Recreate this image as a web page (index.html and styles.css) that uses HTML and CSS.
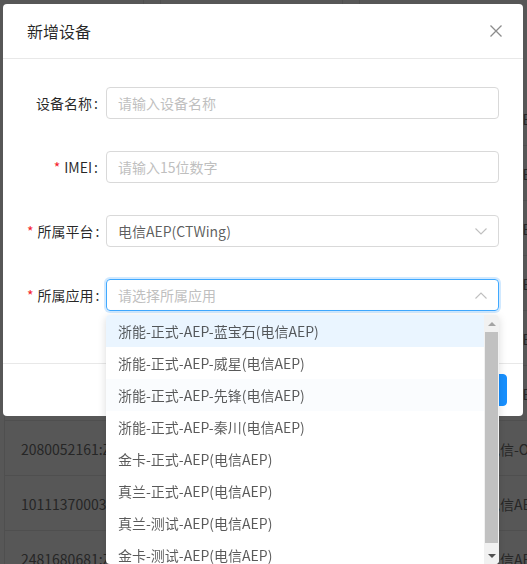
FILE: index.html
```html
<!DOCTYPE html>
<html lang="zh">
<head>
<meta charset="utf-8">
<title>新增设备</title>
<link rel="stylesheet" href="styles.css">
</head>
<body>
<div class="page">
  <div class="thead">
    <div class="th th-a"></div>
    <div class="th th-b"></div>
    <div class="th th-c"></div>
    <div class="th th-d"></div>
    <div class="th th-e"></div>
  </div>
  <div class="table">
    <div class="row"><span class="c1">1204510032:ZN</span><span class="c2">电信AEP</span></div>
    <div class="row"><span class="c1">2080052158:ZN</span><span class="c2">电信AEP</span></div>
    <div class="row"><span class="c1">2080052159:ZN</span><span class="c2">电信AEP</span></div>
    <div class="row"><span class="c1">2080052160:ZN</span><span class="c2">电信AEP</span></div>
    <div class="row"><span class="c1">2080052162:ZN</span><span class="c2">电信AEP</span></div>
    <div class="row"><span class="c1">2080052163:ZN</span><span class="c2">电信AEP</span></div>
    <div class="row"><span class="c1">2080052161:ZN</span><span class="c2">电信-OC</span></div>
    <div class="row"><span class="c1">10111370003658</span><span class="c2">电信AEP</span></div>
    <div class="row"><span class="c1">2481680681:ZN</span><span class="c2">电信AEP</span></div>
  </div>
</div>

<div class="mask">
  <div class="modal">
    <div class="modal-header">
      <span class="modal-title">新增设备</span>
      <button class="modal-close" type="button" aria-label="关闭">
        <svg width="12" height="12" viewBox="0 0 12 12"><path d="M0.5 0.5 L11.5 11.5 M11.5 0.5 L0.5 11.5" stroke="#8c8c8c" stroke-width="1.3" fill="none"/></svg>
      </button>
    </div>
    <div class="modal-body">
      <div class="form-item">
        <label class="form-label">设备名称</label>
        <div class="form-control"><input class="input" type="text" placeholder="请输入设备名称"></div>
      </div>
      <div class="form-item">
        <label class="form-label"><span class="req">*</span>IMEI</label>
        <div class="form-control"><input class="input" type="text" placeholder="请输入15位数字"></div>
      </div>
      <div class="form-item">
        <label class="form-label"><span class="req">*</span>所属平台</label>
        <div class="form-control">
          <div class="select">
            <span class="select-value">电信AEP(CTWing)</span>
            <svg class="select-arrow" width="12" height="7" viewBox="0 0 12 7"><path d="M0.5 0.5 L6 6 L11.5 0.5" stroke="#bfbfbf" stroke-width="1.1" fill="none"/></svg>
          </div>
        </div>
      </div>
      <div class="form-item">
        <label class="form-label"><span class="req">*</span>所属应用</label>
        <div class="form-control">
          <div class="select select-open">
            <span class="select-placeholder">请选择所属应用</span>
            <svg class="select-arrow" width="12" height="7" viewBox="0 0 12 7"><path d="M0.5 6.5 L6 1 L11.5 6.5" stroke="#bfbfbf" stroke-width="1.1" fill="none"/></svg>
          </div>
          <div class="dropdown">
            <ul class="options">
              <li class="option option-active">浙能-正式-AEP-蓝宝石(电信AEP)</li>
              <li class="option">浙能-正式-AEP-威星(电信AEP)</li>
              <li class="option option-hover">浙能-正式-AEP-先锋(电信AEP)</li>
              <li class="option">浙能-正式-AEP-秦川(电信AEP)</li>
              <li class="option">金卡-正式-AEP(电信AEP)</li>
              <li class="option">真兰-正式-AEP(电信AEP)</li>
              <li class="option">真兰-测试-AEP(电信AEP)</li>
              <li class="option">金卡-测试-AEP(电信AEP)</li>
            </ul>
            <div class="scrollbar">
              <div class="sb-btn"><span class="tri-up"></span></div>
              <div class="sb-track"><div class="sb-thumb"></div></div>
              <div class="sb-btn"><span class="tri-down"></span></div>
            </div>
          </div>
        </div>
      </div>
    </div>
    <div class="modal-footer">
      <button class="btn" type="button">取 消</button>
      <button class="btn btn-primary" type="button">确 定</button>
    </div>
  </div>
</div>
</body>
</html>
```

FILE: styles.css
```css
* { box-sizing: border-box; }
html, body {
  margin: 0;
  padding: 0;
  height: 100%;
  overflow: hidden;
}
body {
  background: #fff;
  font-family: "Noto Sans CJK SC", "Microsoft YaHei", "Liberation Sans", sans-serif;
  font-size: 14px;
  color: rgba(0,0,0,.85);
}

/* background page */
.thead {
  display: flex;
  height: 91px;
}
.th { border-right: 1px solid #e8e8e8; }
.th-a { width: 144px; }
.th-b { width: 17px; }
.th-c { width: 182px; }
.th-d { width: 17px; }
.th-e { flex: 1; border-right: none; }

.table {
  margin-left: 4px;
  border-left: 1px solid #e8e8e8;
}
.row {
  display: grid;
  grid-template-columns: 481px 1fr;
  height: 55px;
  align-items: center;
  border-bottom: 1px solid #e8e8e8;
  color: #707070;
  white-space: nowrap;
  overflow: hidden;
  line-height: 22px;
  padding-top: 1px;
}
.c1 { padding-left: 16px; }

/* mask & modal */
.mask {
  position: fixed;
  inset: 0;
  background: rgba(0,0,0,.66);
}
.modal {
  position: absolute;
  top: 4px;
  left: 3px;
  width: 520px;
  background: #fff;
  border-radius: 4px;
}
.modal-header {
  display: flex;
  align-items: center;
  justify-content: space-between;
  height: 55px;
  padding-left: 24px;
  border-bottom: 1px solid #e8e8e8;
}
.modal-title {
  font-size: 16px;
  line-height: 22px;
  color: rgba(0,0,0,.85);
}
.modal-close {
  width: 56px;
  height: 54px;
  border: 0;
  background: none;
  padding: 0;
  display: flex;
  align-items: center;
  justify-content: center;
  padding-left: 1px;
}
.modal-close svg { display: block; }

.modal-body {
  padding: 28px 24px 20px;
}
.form-item {
  display: grid;
  grid-template-columns: 79px 1fr;
  height: 32px;
  margin-bottom: 32px;
}
.form-label {
  display: block;
  height: 32px;
  text-align: right;
  line-height: 32px;
  padding-right: 8px;
  color: rgba(0,0,0,.85);
  white-space: nowrap;
  overflow: visible;
}
.form-label::after {
  content: ":";
  margin-left: 2px;
}
.req {
  color: #f5222d;
  margin-right: 4px;
  line-height: 1;
}
.form-control { position: relative; height: 32px; }

.input {
  display: block;
  width: 100%;
  height: 32px;
  padding: 0 11px;
  border: 1px solid #d9d9d9;
  border-radius: 4px;
  font: inherit;
  font-size: 14px;
  color: rgba(0,0,0,.65);
  outline: none;
}
.input::placeholder { color: #bfbfbf; }

.select {
  display: flex;
  align-items: center;
  justify-content: space-between;
  height: 32px;
  padding: 0 11px;
  border: 1px solid #d9d9d9;
  border-radius: 4px;
  line-height: 22px;
}
.select-value { color: rgba(0,0,0,.65); }
.select-placeholder { color: #bfbfbf; }
.select-arrow { display: block; }
.select-open {
  border-color: #40a9ff;
  box-shadow: 0 0 0 2px rgba(24,144,255,.2);
}

/* dropdown */
.dropdown {
  position: absolute;
  top: calc(100% + 4px);
  left: 0;
  right: 0;
  height: 249px;
  display: flex;
  background: #fff;
  border-radius: 4px;
  box-shadow: 0 2px 8px rgba(0,0,0,.15);
  overflow: hidden;
  z-index: 10;
}
.options {
  flex: 1;
  margin: 0;
  padding: 0;
  list-style: none;
}
.option {
  height: 32px;
  padding: 5px 12px;
  line-height: 22px;
  color: rgba(0,0,0,.65);
  white-space: nowrap;
}
.option-active { background: #eaf5ff; }
.option-hover { background: #fafcfe; }

.scrollbar {
  width: 15px;
  display: flex;
  flex-direction: column;
  background: #f1f1f1;
}
.sb-btn {
  height: 17px;
  display: flex;
  align-items: center;
  justify-content: center;
}
.tri-up {
  width: 0; height: 0;
  border-left: 4px solid transparent;
  border-right: 4px solid transparent;
  border-bottom: 4px solid #a3a3a3;
}
.tri-down {
  width: 0; height: 0;
  border-left: 4px solid transparent;
  border-right: 4px solid transparent;
  border-top: 4px solid #505050;
}
.sb-track {
  flex: 1;
  padding: 0 1px;
}
.sb-thumb {
  height: 211px;
  background: #c1c1c1;
}

/* footer */
.modal-footer {
  display: flex;
  justify-content: flex-end;
  gap: 8px;
  padding: 10px 16px;
  border-top: 1px solid #e8e8e8;
}
.btn {
  height: 32px;
  padding: 0 15px;
  border: 1px solid #d9d9d9;
  border-radius: 4px;
  background: #fff;
  font: inherit;
  font-size: 14px;
  color: rgba(0,0,0,.65);
}
.btn-primary {
  background: #1890ff;
  border-color: #1890ff;
  color: #fff;
}
```
